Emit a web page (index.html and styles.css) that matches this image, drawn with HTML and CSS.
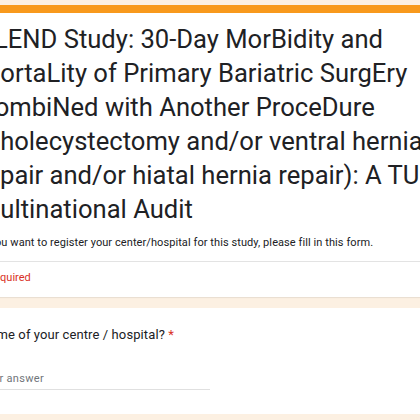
FILE: index.html
```html
<!DOCTYPE html>
<html>
<head>
<meta charset="utf-8">
<link rel="stylesheet" href="styles.css">
</head>
<body>
<div class="page">
  <div class="card title-card">
    <div class="accent"></div>
    <div class="title-body">
      <h1 class="title">BLEND Study: 30-Day MorBidity and<br>MortaLity of Primary Bariatric SurgEry<br>CombiNed with Another ProceDure<br>(cholecystectomy and/or ventral hernia<br>repair and/or hiatal hernia repair): A TUGS<br>Multinational Audit</h1>
      <p class="desc">If you want to register your center/hospital for this study, please fill in this form.</p>
    </div>
    <div class="divider"></div>
    <div class="required">* Required</div>
  </div>
  <div class="card q-card">
    <div class="q-title">Name of your centre / hospital? <span class="star">*</span></div>
    <div class="answer">Your answer</div>
  </div>
</div>
</body>
</html>
```
FILE: styles.css
```css
html, body {
  margin: 0;
  padding: 0;
  background: #fcf0e2;
  overflow: hidden;
}
.page {
  margin-left: -44px;
  width: 520px;
  padding-top: 5px;
  display: flex;
  flex-direction: column;
  gap: 11px;
}
.card {
  background: #ffffff;
  border-radius: 8px;
  box-shadow: 0 1px 1px rgba(0, 0, 0, 0.08);
}
.accent {
  height: 8px;
  background: #f8991c;
  border-radius: 8px 8px 0 0;
}
.title-body {
  padding: 9px 24px 10px;
}
.title {
  margin: 0 0 0 -2px;
  font-family: Roboto, "Liberation Sans", sans-serif;
  font-weight: 400;
  font-size: 25.6px;
  line-height: 34px;
  color: #202124;
  white-space: nowrap;
}
.desc {
  margin: 9px 0 0;
  font-family: Roboto, "Liberation Sans", sans-serif;
  font-size: 11px;
  line-height: 16px;
  letter-spacing: 0.08px;
  color: #202124;
}
.divider {
  height: 1px;
  background: #e3e3e3;
}
.required {
  padding: 8px 24px 11px;
  font-family: Roboto, "Liberation Sans", sans-serif;
  font-size: 11px;
  line-height: 16px;
  color: #d93025;
}
.q-card {
  padding: 17px 24px 24px;
}
.q-title {
  font-family: Roboto, "Liberation Sans", sans-serif;
  font-size: 13px;
  line-height: 20px;
  letter-spacing: 0.1px;
  color: #202124;
}
.star {
  color: #d93025;
}
.answer {
  margin-top: 26px;
  width: 230px;
  padding-bottom: 2px;
  border-bottom: 1px solid #e0e0e0;
  font-family: Roboto, "Liberation Sans", sans-serif;
  font-size: 11px;
  line-height: 16px;
  letter-spacing: 0.3px;
  color: #70757a;
}
```
